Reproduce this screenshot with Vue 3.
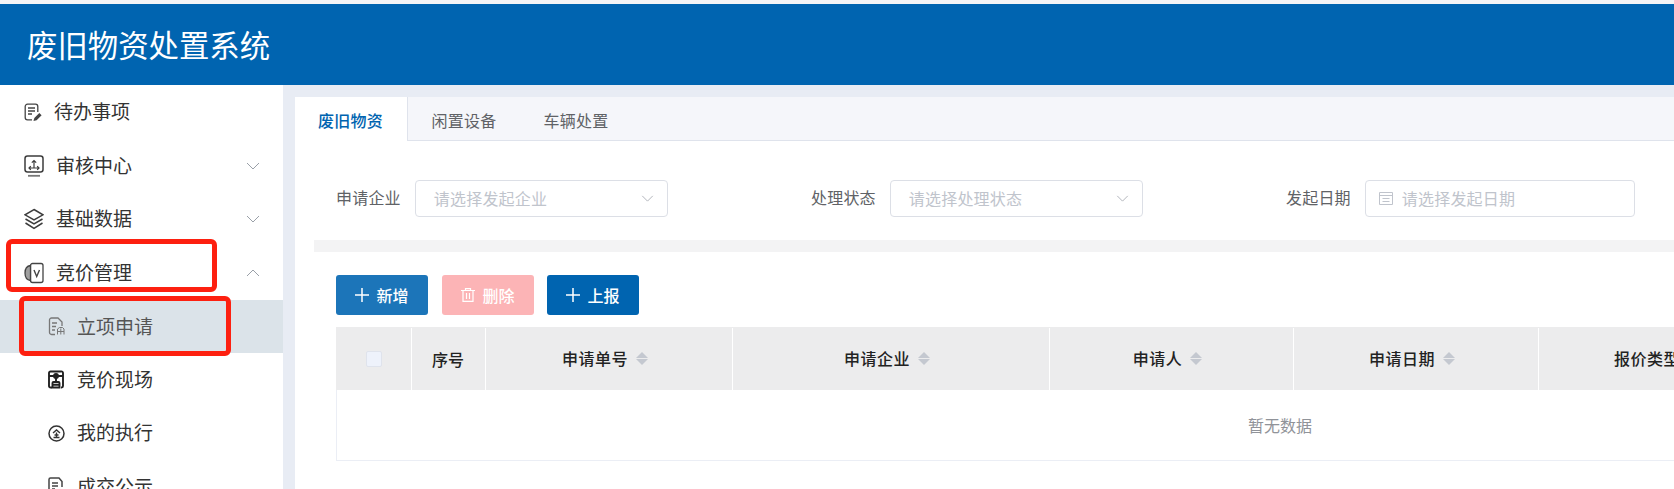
<script setup>
const cols = [
  { label: '申请单号', w: 247 },
  { label: '申请企业', w: 317 },
  { label: '申请人', w: 244 },
  { label: '申请日期', w: 245 },
  { label: '报价类型', w: 245 }
]
</script>

<template>
  <div class="page">
    <header class="top"><h1>废旧物资处置系统</h1></header>
    <div class="body">
      <aside class="side">
        <div class="item">
          <svg class="ic" viewBox="0 0 18 18" fill="none" stroke="#444" stroke-width="1.300"><path d="M8 16.800H3.500A2.300 2.300 0 0 1 1.200 14.500V3.500A2.300 2.300 0 0 1 3.500 1.200h8A2.300 2.300 0 0 1 13.800 3.500V9"/><path d="M4 5h7M4 8h7M4 11h4"/><path d="M9.500 18l.8-3 5-5 2.300 2.200-5 5z" fill="#444" stroke="none"/></svg>
          <span class="tx">待办事项</span>
        </div>
        <div class="item">
          <svg class="ic wide" viewBox="0 0 20 22" fill="none" stroke="#3c3c3c" stroke-width="1.500"><rect x="1" y="1" width="18" height="16" rx="2.500"/><path d="M4 20.800h12" stroke-width="1.800" stroke="#777"/><path d="M10 13V5.500M7.800 7.700 10 5.500l2.200 2.200M5 13h10M6.800 11.200 5 13l1.800 1.800M13.200 11.200 15 13l-1.800 1.800" stroke-width="1.200"/></svg>
          <span class="tx">审核中心</span>
          <svg class="chev" viewBox="0 0 14 8" fill="none" stroke="#9aa0a8" stroke-width="1"><path d="M1 1l6 6 6-6"/></svg>
        </div>
        <div class="item">
          <svg class="ic wide" viewBox="0 0 20 22" fill="none" stroke="#3c3c3c" stroke-width="1.500"><path d="M10 1.500 19 6.800 10 12 1 6.800z"/><path d="M1.500 11 10 16l8.500-5M1.500 15 10 20.300 18.500 15"/></svg>
          <span class="tx">基础数据</span>
          <svg class="chev" viewBox="0 0 14 8" fill="none" stroke="#9aa0a8" stroke-width="1"><path d="M1 1l6 6 6-6"/></svg>
        </div>
        <div class="item">
          <svg class="ic wide" viewBox="0 0 20 22" fill="none" stroke="#444" stroke-width="1.300"><rect x="6.500" y="1.500" width="12.500" height="19" rx="2"/><path d="M6.500 3.500C3 4 1 7 1 11s2 7 5.500 7.500V3.500z" fill="#a0a0a0"/><path d="M10 8l2.700 6.500L15.500 8" stroke-width="1.400"/></svg>
          <span class="tx">竞价管理</span>
          <svg class="chev" viewBox="0 0 14 8" fill="none" stroke="#9aa0a8" stroke-width="1"><path d="M1 7l6-6 6 6"/></svg>
        </div>
        <div class="item sub active">
          <svg class="ic" viewBox="0 0 17 19" fill="none" stroke="#777" stroke-width="1.300"><path d="M7 17.500H3.500A2 2 0 0 1 1.500 15.500V3A2 2 0 0 1 3.500 1h6.500l4 4v4"/><path d="M4 6h5M4 9.500h4M4 13h3"/><path d="M9.500 17.500V12l2-1.500h3l1.500 1.500v5.500M12.800 11.500v6M9.500 14.500h6.500" stroke-width="1"/></svg>
          <span class="tx">立项申请</span>
        </div>
        <div class="item sub">
          <svg class="ic" viewBox="0 0 17 19" fill="none" stroke="#222" stroke-width="1.900"><path d="M4 17.500H2.500A1.500 1.500 0 0 1 1 16V3a1.500 1.500 0 0 1 1.500-1.500h10.500A1.500 1.500 0 0 1 15 3v13a1.500 1.500 0 0 1-1.500 1.500H13M1 6h14"/><circle cx="8" cy="6" r="2" fill="#222"/><path d="M4.500 17.500v-4.500a1 1 0 0 1 1-1h5a1 1 0 0 1 1 1v4.500zM4.500 14.800h7M8 8v4"/></svg>
          <span class="tx">竞价现场</span>
        </div>
        <div class="item sub">
          <svg class="ic" viewBox="0 0 17 19" fill="none" stroke="#333" stroke-width="1.500"><circle cx="8.500" cy="9.500" r="7.500"/><path d="M5 9l3.500-3L12 9M8.500 8.500v5M5.500 13.500h6M6.500 11h4" stroke-width="1.400"/></svg>
          <span class="tx">我的执行</span>
        </div>
        <div class="item sub">
          <svg class="ic" viewBox="0 0 17 19" fill="none" stroke="#444" stroke-width="1.500"><path d="M7 18H2.500A1.500 1.500 0 0 1 1 16.500V2.500A1.500 1.500 0 0 1 2.500 1h8.500l3 3.500V10"/><path d="M4 6h6M4 9h6M4 12h3M9 16h7"/></svg>
          <span class="tx">成交公示</span>
        </div>
      </aside>
      <div class="gutter">
        <main class="card">
          <nav class="tabs">
            <a class="tab on">废旧物资</a>
            <a class="tab">闲置设备</a>
            <a class="tab">车辆处置</a>
          </nav>
          <form class="filters" @submit.prevent>
            <label class="field">
              <span class="lab">申请企业</span>
              <span class="input sel"><em>请选择发起企业</em>
                <svg class="arrow" viewBox="0 0 14 8" fill="none" stroke="#a8acb4" stroke-width="1"><path d="M1 1l6 6 6-6"/></svg>
              </span>
            </label>
            <label class="field">
              <span class="lab">处理状态</span>
              <span class="input sel"><em>请选择处理状态</em>
                <svg class="arrow" viewBox="0 0 14 8" fill="none" stroke="#a8acb4" stroke-width="1"><path d="M1 1l6 6 6-6"/></svg>
              </span>
            </label>
            <label class="field">
              <span class="lab">发起日期</span>
              <span class="input date">
                <svg class="cal" viewBox="0 0 14 14" fill="none" stroke="#c0c4cc" stroke-width="1"><path d="M.5 1.500h13v12H.5zM.5 4.500h13M3.500 7.500h7M3.500 10.500h7"/></svg>
                <em>请选择发起日期</em>
              </span>
            </label>
          </form>
          <div class="band"></div>
          <div class="actions">
            <button class="btn add" type="button"><svg class="bi" viewBox="0 0 14 14" stroke="currentColor" stroke-width="1.500"><path d="M7 0v14M0 7h14"/></svg>新增</button>
            <button class="btn del" type="button"><svg class="bi" viewBox="0 0 14 14" fill="none" stroke="currentColor" stroke-width="1.200"><path d="M0 2.500h14M4.500 2.500V.6h5v1.900M2 2.500V13.400h10V2.500M5.500 5v6M8.500 5v6"/></svg>删除</button>
            <button class="btn rep" type="button"><svg class="bi" viewBox="0 0 14 14" stroke="currentColor" stroke-width="1.500"><path d="M7 0v14M0 7h14"/></svg>上报</button>
          </div>
          <div class="table">
            <div class="thead">
              <div class="th chk"><i class="box"></i></div>
              <div class="th no">序号</div>
              <div v-for="c in cols" :key="c.label" class="th sortable" :style="{ flexBasis: c.w + 'px' }">
                <span class="name">{{ c.label }}</span>
                <span class="sort"><i class="up"></i><i class="down"></i></span>
              </div>
            </div>
            <div class="empty"><span>暂无数据</span></div>
          </div>
        </main>
      </div>
    </div>
    <div class="mark m1"></div>
    <div class="mark m2"></div>
  </div>
</template>

<style>
html, body { margin: 0; background: #fff; }
</style>

<style scoped>
.page {
  position: relative;
  width: 1674px;
  height: 489px;
  overflow: hidden;
  padding-top: 4px;
  box-sizing: border-box;
  font-family: "Noto Sans CJK SC", "Noto Sans", sans-serif;
  background: #f4f4f6;
}
.top {
  height: 81px;
  background: #0064b0;
  display: flex;
  align-items: center;
  padding-left: 27px;
}
h1 { margin: 0; font-size: 30.4px; font-weight: 400; color: #fff; line-height: 1; }
.body { display: flex; height: 404px; }
.side { width: 283px; flex: none; background: #fff; overflow: hidden; padding-top: 0.5px; box-sizing: border-box; }
.item {
  height: 53.5px;
  display: flex;
  align-items: center;
  padding-left: 24px;
  font-size: 19px;
  color: #333;
}
.ic { width: 18px; height: 18px; flex: none; margin-right: 12px; }
.ic.wide { width: 20px; height: 22px; margin-right: 12px; }
.tx { flex: 1; line-height: 1; padding-bottom: 3px; }
.active .tx { padding-bottom: 2px; }
.chev { width: 14px; height: 8px; margin-right: 23px; flex: none; }
.sub { padding-left: 48px; }
.sub .ic { width: 17px; height: 19px; margin-right: 12px; }
.active { background: #dbe3e9; color: #555; }
.gutter { flex: 1; background: #e8ecf4; padding: 12px 0 0 12px; min-width: 0; }
.card { background: #fff; height: 392px; overflow: hidden; }
.tabs { display: flex; height: 44px; background: #f5f6fa; border-bottom: 1px solid #dfe3ec; box-sizing: border-box; }
.tab { width: 112px; text-align: center; line-height: 46px; font-size: 16px; color: #606266; letter-spacing: 0.2px; }
.tab.on { text-indent: -1px; background: #fff; color: #0064b0; font-weight: 500; border-right: 1px solid #dfe3ec; height: 44px; }
.filters { display: flex; gap: 42px; height: 99px; padding: 39px 0 0 41px; box-sizing: border-box; }
.field { display: flex; align-items: flex-start; flex: none; width: 433px; }
.lab { font-size: 16px; color: #606266; line-height: 35px; margin-right: 14px; letter-spacing: 0.2px; }
.input {
  height: 37px;
  box-sizing: border-box;
  border: 1px solid #dcdfe6;
  border-radius: 4px;
  display: flex;
  align-items: center;
  font-size: 16px;
  padding-bottom: 1px;
}
.input em { font-style: normal; color: #c0c4cc; line-height: 1; letter-spacing: 0.2px; }
.sel { width: 253px; padding-left: 18px; justify-content: space-between; }
.arrow { width: 13px; height: 7px; margin-right: 13px; }
.date { width: 270px; padding-left: 13px; }
.cal { width: 14px; height: 14px; margin-right: 9px; }
.band { height: 12px; margin-left: 19px; background: #f3f3f4; }
.actions { display: flex; gap: 14px; padding: 23px 0 12px 41px; }
.rep { margin-left: -1px; }
.btn {
  width: 92px;
  height: 40px;
  border: 0;
  border-radius: 3px;
  color: #fff;
  font: inherit;
  font-size: 16px;
  font-weight: 500;
  display: flex;
  align-items: center;
  justify-content: center;
  gap: 7px;
  padding: 0;
}
.bi { width: 14px; height: 14px; }
.add { background: #1c75b9; }
.del { background: #fcb4b6; }
.rep { background: #0064b0; }
.table { margin-left: 41px; width: 1888px; border: 1px solid #ebeef5; border-top: 0; box-sizing: border-box; }
.thead { display: flex; height: 63px; background: #ececed; margin-left: -1px; }
.th {
  flex: 0 0 auto;
  border-left: 1px solid #fff;
  box-sizing: border-box;
  display: flex;
  align-items: center;
  justify-content: center;
  font-size: 16px;
  font-weight: 500;
  color: #222;
  margin-top: 1px;
}
.sortable { padding-right: 8px; padding-bottom: 2px; }
.name { letter-spacing: 0.5px; margin-right: 8px; }
.chk { width: 75px; border-left: 0; }
.no { width: 74px; padding-right: 1px; }
.box { width: 16px; height: 16px; border: 1px solid #dfe3ec; background: #eef2fb; border-radius: 2px; box-sizing: border-box; }
.sort { display: flex; flex-direction: column; gap: 1px; }
.sort i { width: 0; height: 0; border: 6px solid transparent; border-top-width: 0; border-bottom-width: 0; }
.up { border-bottom: 6px solid #c4c8d0 !important; }
.down { border-top: 6px solid #c4c8d0 !important; }
.empty { height: 70px; display: flex; align-items: center; justify-content: center; font-size: 16px; color: #909399; }
.mark { position: absolute; border: 5px solid #fd2010; border-radius: 6px; box-sizing: border-box; pointer-events: none; }
.m1 { left: 6px; top: 239px; width: 211px; height: 53px; }
.m2 { left: 19px; top: 296px; width: 212px; height: 60px; }
</style>
